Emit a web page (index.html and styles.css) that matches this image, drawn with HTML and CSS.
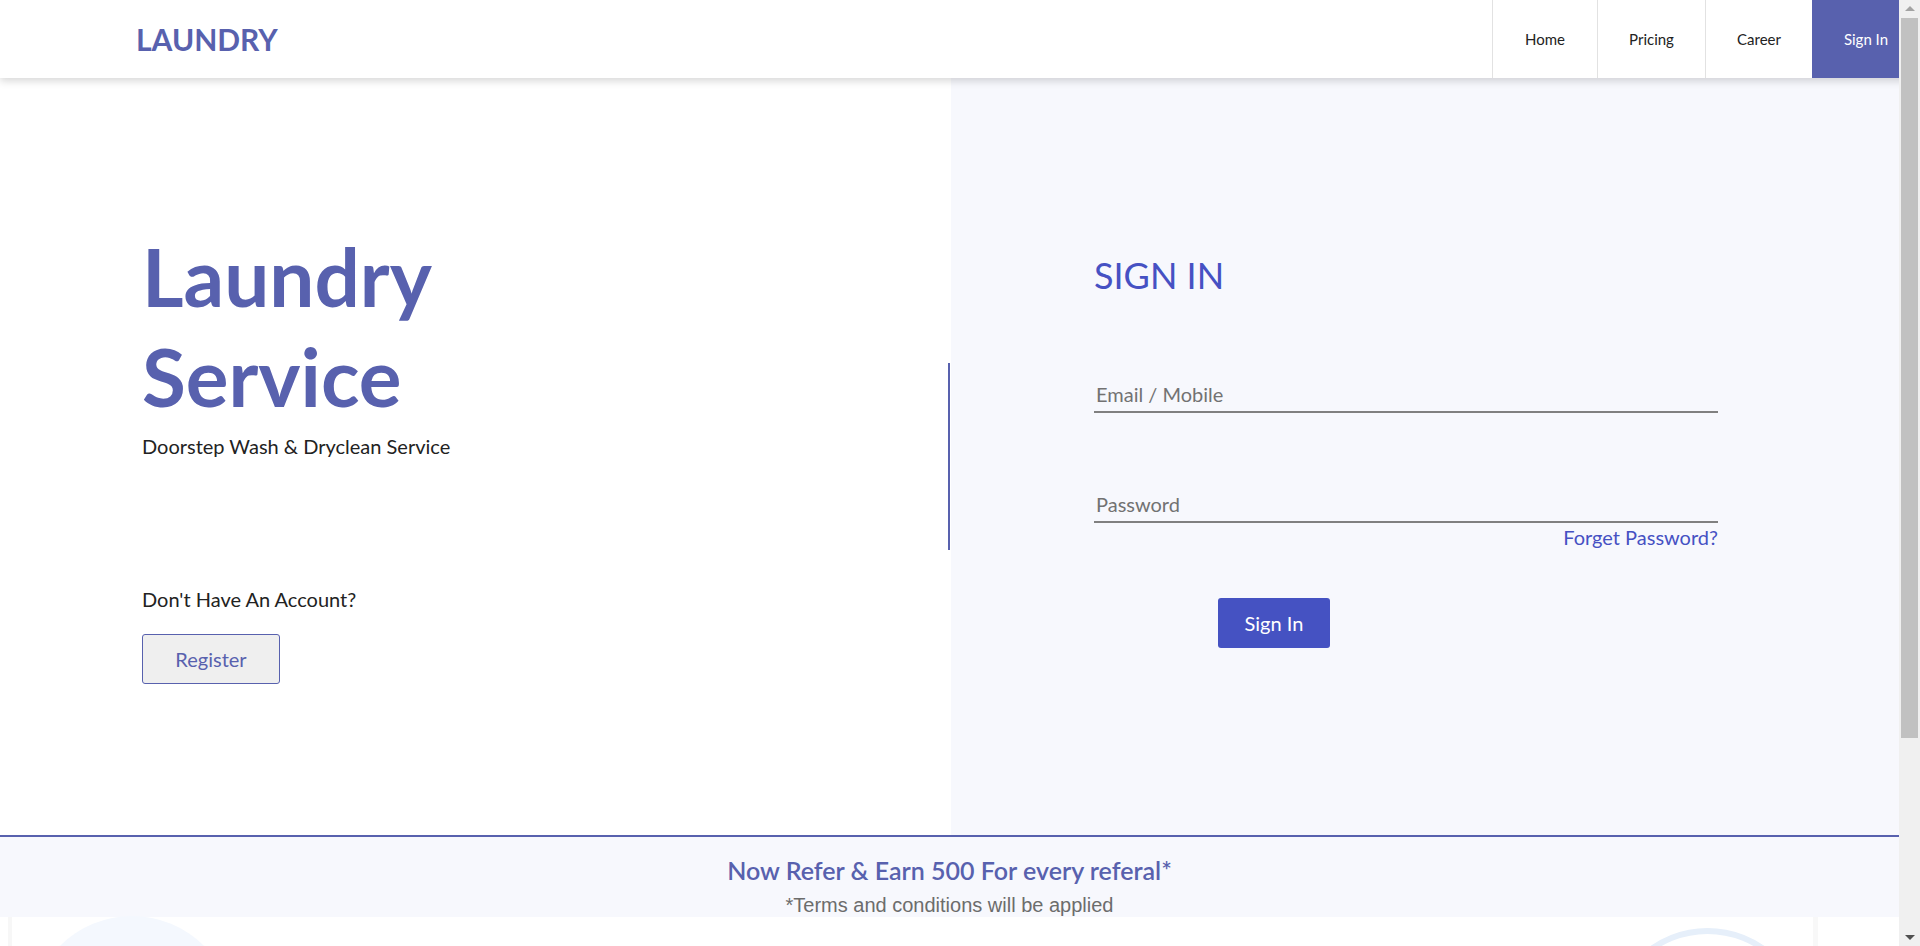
FILE: index.html
```html
<!DOCTYPE html>
<html lang="en">
<head>
<meta charset="utf-8">
<title>Laundry Service</title>
<link rel="stylesheet" href="styles.css">
</head>
<body>
<header class="navbar">
  <div class="logo">LAUNDRY</div>
  <nav class="nav">
    <a class="nav-item nav-home" href="#">Home</a>
    <a class="nav-item nav-pricing" href="#">Pricing</a>
    <a class="nav-item nav-career" href="#">Career</a>
    <a class="nav-item nav-signin" href="#">Sign In</a>
  </nav>
</header>

<main class="hero">
  <section class="hero-left">
    <div class="intro">
      <h1 class="title">Laundry<br>Service</h1>
      <p class="tagline">Doorstep Wash &amp; Dryclean Service</p>
      <p class="no-account">Don't Have An Account?</p>
      <button class="btn-register" type="button">Register</button>
    </div>
    <div class="divider"></div>
  </section>

  <section class="hero-right">
    <h2 class="signin-title">SIGN IN</h2>
    <form class="signin-form">
      <input class="field field-email" type="text" placeholder="Email / Mobile">
      <input class="field field-password" type="password" placeholder="Password">
      <a class="forgot" href="#">Forget Password?</a>
      <button class="btn-signin" type="button">Sign In</button>
    </form>
  </section>
</main>

<footer class="refer">
  <p class="refer-title">Now Refer &amp; Earn 500 For every referal*</p>
  <p class="refer-terms">*Terms and conditions will be applied</p>
</footer>

<section class="below">
  <span class="deco deco-circle"></span>
  <span class="deco deco-ring"></span>
  <span class="deco deco-bar1"></span>
  <span class="deco deco-bar2"></span>
</section>

<div class="scrollbar">
  <span class="sb-up"></span>
  <span class="sb-thumb"></span>
  <span class="sb-down"></span>
</div>
</body>
</html>
```

FILE: styles.css
```css
* { box-sizing: border-box; }

html, body {
  margin: 0;
  padding: 0;
  overflow: hidden;
  height: 100%;
}

body {
  font-family: Lato, "Open Sans", sans-serif;
  color: #222;
  background: #fff;
  width: 1920px;
}

/* ---------- Navbar ---------- */
.navbar {
  height: 78px;
  display: flex;
  align-items: center;
  justify-content: space-between;
  background: #fff;
  box-shadow: 0 3px 8px rgba(0, 0, 0, 0.16);
  position: relative;
  z-index: 2;
}

.logo {
  margin-left: 136px;
  font-size: 30px;
  font-weight: 700;
  color: #5861ae;
  line-height: 36px;
}

.nav {
  display: flex;
  height: 100%;
}

.nav-item {
  display: flex;
  align-items: center;
  justify-content: center;
  height: 100%;
  font-size: 15px;
  color: #222;
  text-decoration: none;
  border-left: 1px solid #e2e2e2;
}

.nav-home { width: 105px; }
.nav-pricing { width: 108px; }
.nav-career { width: 107px; }
.nav-signin {
  width: 108px;
  background: #5861ae;
  color: #fff;
  border-left: none;
}

/* ---------- Hero ---------- */
.hero {
  display: grid;
  grid-template-columns: 951px 1fr;
  height: 757px;
}

.hero-left {
  display: flex;
  background: #fff;
}

.intro {
  flex: 1;
  padding-top: 148px;
  padding-left: 142px;
}

.title {
  margin: 0;
  font-size: 80px;
  line-height: 100px;
  font-weight: 700;
  color: #5861ae;
}

.tagline {
  margin: 8px 0 0;
  font-size: 20px;
  line-height: 24px;
  color: #222;
}

.no-account {
  margin: 129px 0 0;
  font-size: 20px;
  line-height: 24px;
  color: #222;
}

.btn-register {
  margin-top: 23px;
  width: 138px;
  height: 50px;
  background: #efefef;
  border: 1px solid #5861ae;
  border-radius: 3px;
  color: #5861ae;
  font-family: Lato, sans-serif;
  font-size: 20px;
  padding: 0;
}

.divider {
  align-self: center;
  width: 2px;
  height: 187px;
  background: #5861ae;
  margin-right: 1px;
}

.hero-right {
  background: #f7f8fd;
  padding-top: 174px;
  padding-left: 143px;
}

.signin-title {
  margin: 0;
  font-size: 36px;
  line-height: 46px;
  font-weight: 400;
  color: #4651c3;
}

.signin-form {
  width: 624px;
  margin-top: 80px;
  display: flex;
  flex-direction: column;
}

.field {
  width: 100%;
  border: none;
  border-bottom: 2px solid #808080;
  background: transparent;
  padding: 4px 2px 5px;
  font-family: Lato, sans-serif;
  font-size: 20px;
  line-height: 24px;
  color: #222;
  outline: none;
}

.field::placeholder { color: #727272; }

.field-password { margin-top: 75px; }

.forgot {
  align-self: flex-end;
  margin-top: 3px;
  font-size: 20px;
  line-height: 23px;
  color: #4651c3;
  text-decoration: none;
}

.btn-signin {
  margin-top: 49px;
  margin-left: 124px;
  width: 112px;
  height: 50px;
  background: #4552c2;
  color: #fff;
  border: none;
  border-radius: 3px;
  font-family: Lato, sans-serif;
  font-size: 20px;
  padding: 0;
}

/* ---------- Refer footer ---------- */
.refer {
  border-top: 2px solid #5861ae;
  background: #f7f8fd;
  height: 82px;
  padding-top: 19px;
  padding-right: 21px;
  text-align: center;
  overflow: hidden;
}

.refer-title {
  margin: 0;
  font-size: 25px;
  line-height: 29px;
  font-weight: 600;
  color: #5861ae;
}

.refer-terms {
  margin: 8px 0 0;
  font-family: "Liberation Sans", Arial, sans-serif;
  font-size: 20px;
  line-height: 24px;
  color: #6c6c6c;
}

/* ---------- Decorations below ---------- */
.below {
  position: relative;
  height: 300px;
}

.deco { position: absolute; display: block; }

.deco-circle {
  left: 30px;
  top: -1px;
  width: 204px;
  height: 204px;
  border-radius: 50%;
  background: #f4f8fe;
}

.deco-ring {
  left: 1608px;
  top: 11px;
  width: 199px;
  height: 199px;
  border-radius: 50%;
  border: 6px solid #e6effa;
}

.deco-bar1 {
  left: 8px;
  top: 0;
  width: 4px;
  height: 60px;
  background: #f7f7f7;
}

.deco-bar2 {
  left: 1813px;
  top: 0;
  width: 5px;
  height: 60px;
  background: #f8f8f8;
}

/* ---------- Fake scrollbar (browser chrome in screenshot) ---------- */
.scrollbar {
  position: fixed;
  top: 0;
  right: 0;
  width: 21px;
  height: 100%;
  background: #f0f0f0;
  z-index: 10;
  display: flex;
  flex-direction: column;
  align-items: center;
}

.sb-up, .sb-down {
  width: 0;
  height: 0;
  border-left: 5px solid transparent;
  border-right: 5px solid transparent;
}

.sb-up {
  margin-top: 6px;
  border-bottom: 5px solid #a3a3a3;
}

.sb-thumb {
  margin-top: 7px;
  width: 17px;
  height: 720px;
  background: #c1c1c1;
}

.sb-down {
  margin-top: auto;
  margin-bottom: 6px;
  border-top: 5px solid #505050;
}
```
